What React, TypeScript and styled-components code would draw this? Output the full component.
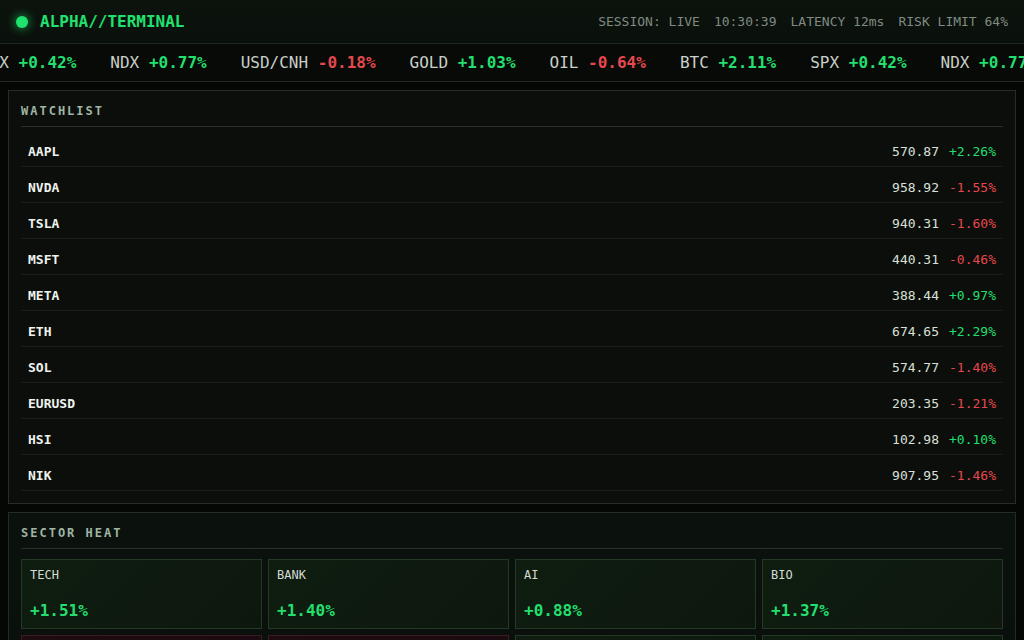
import React from "react";
import styled, { createGlobalStyle } from "styled-components";

const Global = createGlobalStyle`
  html, body {
    margin: 0;
    padding: 0;
    height: 100%;
    overflow: hidden;
    background: #050705;
  }
  body {
    font-family: "DejaVu Sans Mono", "Liberation Mono", monospace;
    color: #d6ddd6;
  }
  * { box-sizing: border-box; }
`;

const GREEN = "#22df6e";
const RED = "#e5484d";

const Shell = styled.div`
  display: flex;
  flex-direction: column;
  min-height: 100vh;
`;

const TopBar = styled.header`
  height: 44px;
  display: flex;
  align-items: center;
  justify-content: space-between;
  padding: 0 16px 0 16px;
  background: linear-gradient(180deg, #0c130d 0%, #0a100b 100%);
  border-bottom: 1px solid #1f2921;
`;

const Brand = styled.div`
  display: flex;
  align-items: center;
  gap: 12px;
`;

const LiveDot = styled.span`
  width: 12px;
  height: 12px;
  border-radius: 50%;
  background: #1fe36f;
  box-shadow: 0 0 8px 2px rgba(31, 227, 111, 0.45);
`;

const BrandName = styled.span`
  font-size: 16px;
  font-weight: 700;
  color: #22e070;
`;

const Status = styled.div`
  display: flex;
  gap: 14px;
  font-size: 13px;
  color: #7f8b82;
`;

/* scrolling quote tape, parked mid-scroll */
const Ticker = styled.div`
  height: 38px;
  display: flex;
  align-items: center;
  overflow: hidden;
  white-space: nowrap;
  background: #080a08;
  border-bottom: 1px solid #232823;
`;

const TickerTrack = styled.div`
  display: flex;
  gap: 34px;
  margin-left: -20px;
  font-size: 16px;
`;

const TickerItem = styled.span`
  color: #c9d0c9;
`;

const Change = styled.span<{ $up: boolean; $bold?: boolean }>`
  color: ${(p) => (p.$up ? GREEN : RED)};
  font-weight: ${(p) => (p.$bold ? 700 : 400)};
`;

const Main = styled.main`
  display: flex;
  flex-direction: column;
  gap: 8px;
  padding: 8px;
`;

const Panel = styled.section<{ $tint?: boolean }>`
  border: 1px solid #262c26;
  background: ${(p) =>
    p.$tint
      ? "linear-gradient(180deg, #0b110c 0%, #0a0f0b 100%)"
      : "#0c0e0c"};
  padding: 13px 12px 12px 12px;
`;

const PanelTitle = styled.h2`
  margin: 0 0 10px 0;
  padding: 0 0 8px 0;
  font-size: 12px;
  line-height: 14px;
  font-weight: 700;
  letter-spacing: 2px;
  color: #9fb5a3;
  border-bottom: 1px solid #2a302a;
`;

const List = styled.div`
  display: flex;
  flex-direction: column;
  gap: 6px;
`;

const Row = styled.div`
  display: flex;
  align-items: center;
  padding: 8px 7px 7px 7px;
  line-height: 14px;
  font-size: 13px;
  border-bottom: 1px solid #1a1e1a;
`;

const Symbol = styled.span`
  flex: 1;
  font-weight: 700;
  color: #eef3ee;
`;

const Quote = styled.span`
  display: flex;
  gap: 10px;
`;

const Price = styled.span`
  color: #d9e0d9;
`;

const HeatGrid = styled.div`
  display: grid;
  grid-template-columns: repeat(4, 1fr);
  gap: 6px;
`;

const HeatCard = styled.div<{ $up: boolean }>`
  height: 70px;
  display: flex;
  flex-direction: column;
  justify-content: space-between;
  padding: 8px 8px 7px 8px;
  border: 1px solid ${(p) => (p.$up ? "#243826" : "#3b1b22")};
  background: ${(p) =>
    p.$up
      ? "linear-gradient(135deg, #0f1d10 0%, #0d170e 100%)"
      : "linear-gradient(135deg, #1f0b12 0%, #1a0a10 100%)"};
`;

const HeatLabel = styled.span`
  font-size: 12px;
  line-height: 15px;
  color: #d3dbd3;
`;

const HeatValue = styled.span<{ $up: boolean }>`
  font-size: 16px;
  line-height: 20px;
  font-weight: 700;
  color: ${(p) => (p.$up ? GREEN : RED)};
`;

const tape = [
  { s: "SPX", c: 0.42 },
  { s: "NDX", c: 0.77 },
  { s: "USD/CNH", c: -0.18 },
  { s: "GOLD", c: 1.03 },
  { s: "OIL", c: -0.64 },
  { s: "BTC", c: 2.11 },
];

const watch = [
  { s: "AAPL", p: 570.87, c: 2.26 },
  { s: "NVDA", p: 958.92, c: -1.55 },
  { s: "TSLA", p: 940.31, c: -1.6 },
  { s: "MSFT", p: 440.31, c: -0.46 },
  { s: "META", p: 388.44, c: 0.97 },
  { s: "ETH", p: 674.65, c: 2.29 },
  { s: "SOL", p: 574.77, c: -1.4 },
  { s: "EURUSD", p: 203.35, c: -1.21 },
  { s: "HSI", p: 102.98, c: 0.1 },
  { s: "NIK", p: 907.95, c: -1.46 },
];

const sectors = [
  { n: "TECH", c: 1.51 },
  { n: "BANK", c: 1.4 },
  { n: "AI", c: 0.88 },
  { n: "BIO", c: 1.37 },
  { n: "ENERGY", c: -0.92 },
  { n: "RETAIL", c: -1.12 },
  { n: "CHIPS", c: 0.64 },
  { n: "CRYPTO", c: 2.05 },
];

const fmt = (v: number) => `${v >= 0 ? "+" : ""}${v.toFixed(2)}%`;

export default function App() {
  const loop = [...tape, ...tape, ...tape];
  return (
    <>
      <Global />
      <Shell>
        <TopBar>
          <Brand>
            <LiveDot />
            <BrandName>ALPHA//TERMINAL</BrandName>
          </Brand>
          <Status>
            <span>SESSION: LIVE</span>
            <span>10:30:39</span>
            <span>LATENCY 12ms</span>
            <span>RISK LIMIT 64%</span>
          </Status>
        </TopBar>
        <Ticker>
          <TickerTrack>
            {loop.map((t, i) => (
              <TickerItem key={i}>
                {t.s} <Change $up={t.c >= 0} $bold>{fmt(t.c)}</Change>
              </TickerItem>
            ))}
          </TickerTrack>
        </Ticker>
        <Main>
          <Panel>
            <PanelTitle>WATCHLIST</PanelTitle>
            <List>
              {watch.map((w) => (
                <Row key={w.s}>
                  <Symbol>{w.s}</Symbol>
                  <Quote>
                    <Price>{w.p.toFixed(2)}</Price>
                    <Change $up={w.c >= 0}>{fmt(w.c)}</Change>
                  </Quote>
                </Row>
              ))}
            </List>
          </Panel>
          <Panel $tint>
            <PanelTitle>SECTOR HEAT</PanelTitle>
            <HeatGrid>
              {sectors.map((s) => (
                <HeatCard key={s.n} $up={s.c >= 0}>
                  <HeatLabel>{s.n}</HeatLabel>
                  <HeatValue $up={s.c >= 0}>{fmt(s.c)}</HeatValue>
                </HeatCard>
              ))}
            </HeatGrid>
          </Panel>
        </Main>
      </Shell>
    </>
  );
}
